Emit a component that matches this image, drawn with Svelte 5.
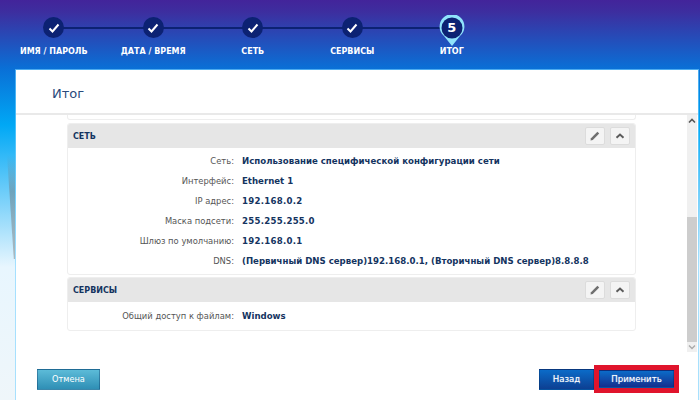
<script>
  const steps = [
    { label: 'ИМЯ / ПАРОЛЬ' },
    { label: 'ДАТА / ВРЕМЯ' },
    { label: 'СЕТЬ' },
    { label: 'СЕРВИСЫ' }
  ];

  const network = [
    ['Сеть:', 'Использование специфической конфигурации сети'],
    ['Интерфейс:', 'Ethernet 1'],
    ['IP адрес:', '192.168.0.2'],
    ['Маска подсети:', '255.255.255.0'],
    ['Шлюз по умолчанию:', '192.168.0.1'],
    ['DNS:', '(Первичный DNS сервер)192.168.0.1, (Вторичный DNS сервер)8.8.8.8']
  ];

  const isNumeric = (v) => /^[\d.]+$/.test(v);
</script>

{#snippet sectionHead(title)}
  <div class="section-head">
    <span class="section-title">{title}</span>
    <div class="tools">
      <button class="tool" aria-label="Изменить">
        <svg width="12" height="12" viewBox="0 0 12 12"><path d="M1.5 10.5l.5-2.3L8.4 1.8l1.8 1.8-6.4 6.4z" fill="#6f6f6f" /></svg>
      </button>
      <button class="tool" aria-label="Свернуть">
        <svg width="12" height="12" viewBox="0 0 12 12"><path d="M2.5 7.8L6 4.6l3.5 3.2" fill="none" stroke="#5c5c5c" stroke-width="2" /></svg>
      </button>
    </div>
  </div>
{/snippet}

<div class="page">
  <div class="wizard">
    {#each steps as step}
      <div class="step">
        <div class="dot">
          <svg width="14" height="14" viewBox="0 0 14 14"><path d="M2.5 7.5l3 3 6-7" fill="none" stroke="#fff" stroke-width="2" /></svg>
        </div>
        <span class="step-label">{step.label}</span>
      </div>
    {/each}
    <div class="step">
      <div class="pin">
        <svg width="26" height="32" viewBox="0 0 26 32">
          <path d="M13 31L5 21A12.4 12.4 0 1 1 21 21z" fill="#8fe3fb" />
          <circle cx="13" cy="13" r="10.5" fill="#0c2273" />
        </svg>
        <span class="pin-num">5</span>
      </div>
      <span class="step-label">ИТОГ</span>
    </div>
  </div>

  <div class="panel">
    <div class="wedge"></div>
    <h1 class="panel-title">Итог</h1>
    <div class="body">
      <div class="scroll-area">
        <div class="prev-end"></div>

        <section class="card">
          {@render sectionHead('СЕТЬ')}
          <div class="rows">
            {#each network as [label, value]}
              <div class="row">
                <span class="label">{label}</span>
                <span class="value" class:num={isNumeric(value)}>{value}</span>
              </div>
            {/each}
          </div>
        </section>

        <section class="card">
          {@render sectionHead('СЕРВИСЫ')}
          <div class="rows short">
            <div class="row">
              <span class="label">Общий доступ к файлам:</span>
              <span class="value">Windows</span>
            </div>
          </div>
        </section>
      </div>

      <div class="scrollbar">
        <svg width="10" height="12" viewBox="0 0 10 12"><path d="M2 7.5l3-3 3 3" fill="none" stroke="#555" stroke-width="1.6" /></svg>
        <div class="track"><div class="thumb"></div></div>
        <svg width="10" height="10" viewBox="0 0 10 10"><path d="M2 3.5l3 3 3-3" fill="none" stroke="#aaa" stroke-width="1.4" /></svg>
      </div>
    </div>

    <div class="footer">
      <button class="btn cancel">Отмена</button>
      <div class="right-btns">
        <button class="btn back">Назад</button>
        <div class="highlight">
          <button class="btn apply">Применить</button>
        </div>
      </div>
    </div>
  </div>
</div>

<style>
  :global(body) {
    margin: 0;
  }

  .page {
    width: 700px;
    height: 400px;
    overflow: hidden;
    font-family: 'DejaVu Sans', Verdana, sans-serif;
    background: linear-gradient(to bottom, #43249a 0, #3d2e9f 12px, #0a6fd6 68px, #00a8f5 125px, #e8f6fe 267px, #eff6fa 400px);
    display: flex;
    flex-direction: column;
  }

  .wizard {
    height: 70px;
    flex: none;
    display: flex;
    padding-left: 4px;
    box-sizing: border-box;
  }

  .step {
    width: 99.5px;
    position: relative;
    display: flex;
    flex-direction: column;
    align-items: center;
    padding-top: 17px;
  }

  .step:not(:last-child)::after {
    content: '';
    position: absolute;
    left: 50%;
    width: 100%;
    top: 27px;
    height: 2px;
    background: #0c2273;
  }

  .dot {
    width: 21px;
    height: 21px;
    border-radius: 50%;
    background: #0c2273;
    display: flex;
    align-items: center;
    justify-content: center;
    position: relative;
    z-index: 1;
  }

  .pin {
    position: relative;
    width: 26px;
    height: 32px;
    margin-top: -2px;
    margin-bottom: -9px;
    z-index: 1;
  }

  .pin svg {
    display: block;
  }

  .pin-num {
    position: absolute;
    left: 0;
    right: 0;
    top: 5px;
    text-align: center;
    color: #fff;
    font-size: 13px;
    font-weight: 700;
    line-height: 16px;
  }

  .step-label {
    margin-top: 9px;
    color: #fff;
    font-size: 8px;
    line-height: 10px;
    font-weight: 700;
    white-space: nowrap;
  }

  .panel {
    flex: 1;
    margin: 0 2px 0 16px;
    background: #fff;
    display: flex;
    flex-direction: column;
    min-height: 0;
    position: relative;
    box-shadow: 0 0 0 1px rgba(120, 210, 255, 0.6);
  }

  /* soft shadow sliver on the left of the panel */
  .wedge {
    position: absolute;
    left: -9px;
    top: 85px;
    width: 8px;
    height: 104px;
    background: linear-gradient(to bottom, rgba(110, 130, 140, 0), rgba(110, 130, 140, 0.55) 35%, rgba(150, 160, 165, 0.7));
    clip-path: polygon(0 0, 100% 0, 100% 100%, 85% 100%);
  }

  .panel-title {
    margin: 0;
    height: 45px;
    box-sizing: border-box;
    padding: 16px 0 0 36px;
    font-size: 13px;
    line-height: 16px;
    font-weight: 400;
    color: #2a4a7c;
    border-bottom: 2px solid #e9e9e9;
    flex: none;
  }

  .body {
    display: flex;
    height: 237px;
    flex: none;
  }

  .scroll-area {
    width: 620px;
    padding-left: 51px;
    overflow: hidden;
  }

  .prev-end {
    height: 5px;
    width: 569px;
    box-sizing: border-box;
    border: 1px solid #eee;
    border-top: 0;
    border-radius: 0 0 3px 3px;
    margin-bottom: 3px;
  }

  .card {
    width: 569px;
    box-sizing: border-box;
    border: 1px solid #eee;
    border-radius: 3px;
    margin-bottom: 2px;
    overflow: hidden;
  }

  .section-head {
    height: 24px;
    background: #e6e6e6;
    display: flex;
    align-items: center;
    justify-content: space-between;
    padding: 0 5px;
  }

  .section-title {
    font-size: 8px;
    font-weight: 700;
    color: #14345f;
  }

  .tools {
    display: flex;
    gap: 5px;
  }

  .tool {
    width: 20px;
    height: 18px;
    padding: 0;
    background: #f4f4f4;
    border: 1px solid #dcdcdc;
    border-radius: 2px;
    display: flex;
    align-items: center;
    justify-content: center;
  }

  .rows {
    padding: 3px 0 3px;
  }

  .rows.short {
    padding: 0;
    height: 28px;
    display: flex;
    align-items: center;
  }

  .row {
    display: flex;
    height: 20px;
    align-items: center;
    width: 100%;
  }

  .label {
    width: 166px;
    text-align: right;
    color: #555;
    font-size: 8.4px;
    flex: none;
  }

  .value {
    margin-left: 8px;
    color: #14345f;
    font-size: 8.6px;
    font-weight: 700;
    white-space: nowrap;
  }

  .value.num {
    letter-spacing: 0.25px;
  }

  .scrollbar {
    margin-left: auto;
    margin-right: 1px;
    width: 10px;
    background: #f0f0f0;
    display: flex;
    flex-direction: column;
  }

  .scrollbar svg {
    flex: none;
    display: block;
  }

  .track {
    flex: 1;
    display: flex;
    flex-direction: column;
    justify-content: flex-end;
  }

  .thumb {
    height: 125px;
    background: #cdcdcd;
  }

  .footer {
    display: flex;
    justify-content: space-between;
    align-items: center;
    padding: 13px 19px 0 21px;
  }

  .right-btns {
    display: flex;
    align-items: center;
  }

  .btn {
    height: 21px;
    padding: 0;
    border: 1px solid rgba(0, 40, 90, 0.35);
    color: #fff;
    font-family: inherit;
    font-size: 8.6px;
    font-weight: 400;
    text-shadow: 0 0 1px rgba(255, 255, 255, 0.6);
  }

  .cancel {
    width: 63px;
    background: linear-gradient(to bottom, #5cbbd8, #2f8fb5);
    font-size: 8.2px;
    text-shadow: none;
  }

  .back {
    width: 55px;
    background: linear-gradient(to bottom, #0b6bc8, #0d3f92);
  }

  .highlight {
    border: 5px solid #e0142c;
    display: flex;
  }

  .apply {
    width: 75px;
    height: 18px;
    background: linear-gradient(to bottom, #0b6bc8, #142f8e);
  }
</style>
